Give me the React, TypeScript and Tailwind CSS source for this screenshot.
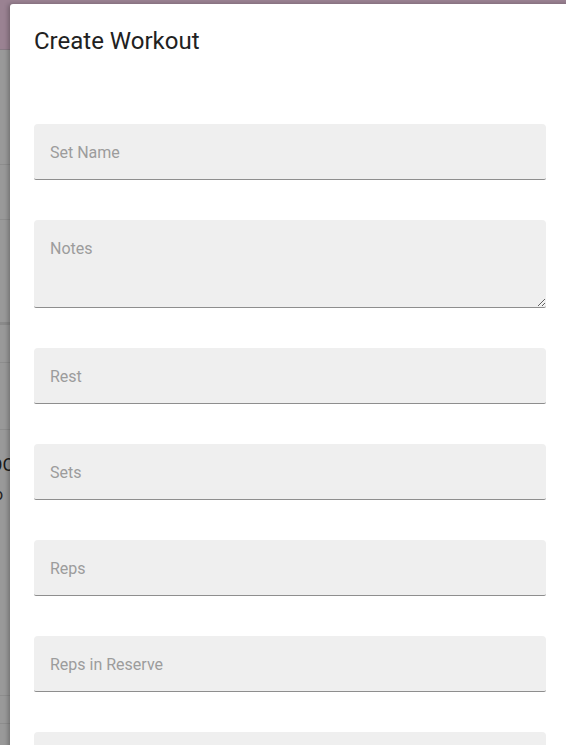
import React from "react";

const fieldCls =
  "block w-full h-[56px] bg-[#efefef] rounded-t-[4px] rounded-b-[2px] border-0 border-b border-[#8e8e8e] px-4 pt-[2px] text-[16px] leading-[20px] text-[#212121] placeholder:text-[#9c9c9c] outline-none";

export default function App() {
  return (
    <div
      className="relative w-[566px] h-[745px] overflow-hidden bg-[#999999]"
      style={{ fontFamily: "Roboto, 'Noto Sans', sans-serif" }}
    >
      {/* underlying page (dimmed) */}
      <div className="flex flex-col w-full">
        <div className="h-[50px] bg-[#9a8292] border-b border-[#877a84]" />
        <div className="h-[115px] border-b border-[#8d8d8d]" />
        <div className="h-[55px] border-b border-[#8d8d8d]" />
        <div className="h-[105px] border-b-[3px] border-[#8a8a8a]" />
        <div className="h-[38px] border-b border-[#8d8d8d]" />
        <div className="h-[67px] border-b border-[#8d8d8d]" />
        <div className="h-[266px] border-b border-[#8d8d8d] pt-[22px]">
          <div className="ml-[-10px] text-[18px] leading-[26px] text-[#1a1a1a]">OO</div>
          <div className="ml-[-6px] mt-[6px] text-[16px] leading-[22px] text-[#222]">o</div>
        </div>
        <div className="h-[28px] border-b border-[#8d8d8d]" />
      </div>

      {/* dialog */}
      <div className="absolute left-[10px] top-[4px] w-[560px] h-[800px] bg-white rounded-tl-[3px] shadow-[-2px_0_4px_rgba(0,0,0,0.25)] px-6">
        <h2 className="pt-[21px] text-[24px] leading-[32px] text-[#212121] font-normal">
          Create Workout
        </h2>
        <div className="mt-[67px] flex flex-col gap-10">
          <input className={fieldCls} placeholder="Set Name" />
          <textarea
            className="block w-full h-[88px] bg-[#efefef] rounded-t-[4px] rounded-b-[2px] border-0 border-b border-[#8e8e8e] px-4 pt-[19px] text-[16px] leading-[20px] text-[#212121] placeholder:text-[#9c9c9c] outline-none resize-y"
            placeholder="Notes"
          />
          <input className={fieldCls} placeholder="Rest" />
          <input className={fieldCls} placeholder="Sets" />
          <input className={fieldCls} placeholder="Reps" />
          <input className={fieldCls} placeholder="Reps in Reserve" />
          <input className={fieldCls} placeholder="Weight" />
        </div>
      </div>
    </div>
  );
}
